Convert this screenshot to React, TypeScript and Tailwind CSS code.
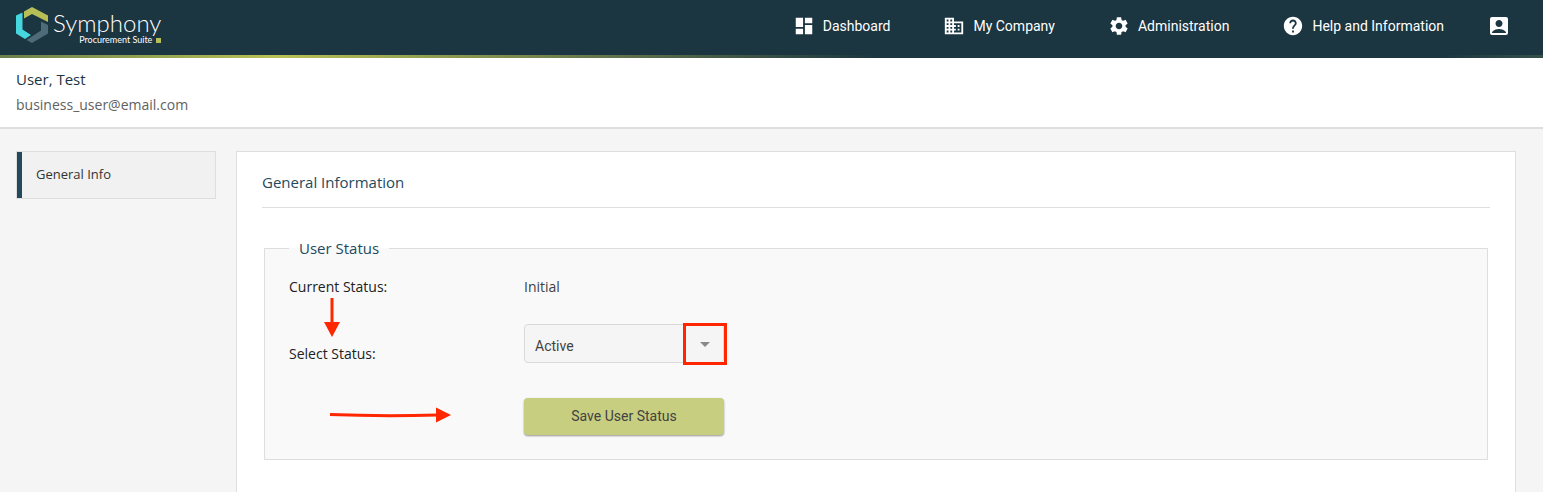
import React from "react";
import {
  MdDashboard,
  MdSettings,
  MdHelp,
  MdAccountBox,
  MdArrowDropDown,
  MdDomain,
} from "react-icons/md";

function Logo() {
  return (
    <a href="#home" aria-label="Symphony Procurement Suite" className="flex items-start gap-[5px] text-white">
      <svg viewBox="0 0 32 36" className="h-9 w-8" aria-hidden="true">
        <path d="M8 4.500 16 0 32 8.500V15L16 7 8 11.500Z" fill="#b6bf55" />
        <path d="M0 8.500 6.500 5.500V22.500L15 28 9 32 0 26.500Z" fill="#45d6de" />
        <path d="M25 14.500 32 18V26.500L16 36 10.500 33 25 23.500Z" fill="#4d6b79" />
      </svg>
      <span className="flex flex-col items-end">
        <span className="font-[Lato] text-2xl leading-8 font-light">Symphony</span>
        <span className="-mt-1 flex items-center gap-1 font-[Lato] text-[9px] leading-2.5">
          Procurement Suite
          <span className="size-[5px] bg-[#b6bf55]" />
        </span>
      </span>
    </a>
  );
}

function NavLink({ icon, label }: { icon: React.ReactNode; label: string }) {
  return (
    <a href="#nav" className="flex items-center gap-2 text-sm text-white">
      {icon}
      {label}
    </a>
  );
}

function Header() {
  return (
    <header className="bg-[#1b3541]">
      <div className="flex h-[55px] items-start justify-between pr-8 pl-4">
        <div className="pt-[7px]">
          <Logo />
        </div>
        <nav className="flex items-center gap-[53px] pt-[14px] font-[Roboto]">
          <NavLink icon={<MdDashboard size={22} />} label="Dashboard" />
          <NavLink icon={<MdDomain size={22} />} label="My Company" />
          <NavLink icon={<MdSettings size={22} />} label="Administration" />
          <NavLink icon={<MdHelp size={22} />} label="Help and Information" />
          <a href="#account" aria-label="Account" className="-ml-2.5 text-white">
            <MdAccountBox size={24} />
          </a>
        </nav>
      </div>
      <div className="h-[3px] bg-[linear-gradient(90deg,#6b7f4c_0%,#b9c155_18%,#1b3541_57%,#1b3541_93%,#35504a_100%)]" />
    </header>
  );
}

function DownArrow() {
  return (
    <svg viewBox="0 0 16 40" className="absolute top-[21px] left-[35px] h-10 w-4" aria-hidden="true">
      <path d="M8 0V26" stroke="#ff2600" strokeWidth="3" />
      <path d="M0 24H16L8 39Z" fill="#ff2600" />
    </svg>
  );
}

function RightArrow() {
  return (
    <svg viewBox="0 0 122 16" className="ml-[41px] h-4 w-[122px]" aria-hidden="true">
      <path d="M0 7.500Q50 9.500 108 8" fill="none" stroke="#ff2600" strokeWidth="3" />
      <path d="M106 .5V15.500L121 8Z" fill="#ff2600" />
    </svg>
  );
}

export default function App() {
  return (
    <div className="flex min-h-screen flex-col bg-[#f5f5f5] font-['Open_Sans',sans-serif]">
      <Header />
      <div className="border-b-2 border-[#dedede] bg-white px-4 pt-[9px] pb-2.5">
        <h1 className="mb-0.5 text-[15px] leading-6 text-[#1b3541]">User, Test</h1>
        <p className="text-sm leading-6 text-[#616161]">business_user@email.com</p>
      </div>
      <div className="flex grow gap-5 pt-[22px] pr-[27px] pl-4">
        <aside className="w-[200px] shrink-0">
          <a href="#general" className="flex h-12 items-center border border-[#dedede] bg-[#f1f1f1] text-[13px] text-[#333]">
            <span className="mr-3.5 h-full w-[5px] bg-[#234a5c]" />
            General Info
          </a>
        </aside>
        <main className="grow border border-b-0 border-[#dedede] bg-white px-[25px] pt-[18px]">
          <h2 className="border-b border-[#dedede] pb-[13px] text-[15px] leading-6 text-[#234a5c]">General Information</h2>
          <fieldset className="mx-0.5 mt-7 h-[224px] border border-[#dedede] bg-[#f9f9f9] px-6">
            <legend className="px-2.5 text-[15px] leading-6 text-[#234a5c]">User Status</legend>
            <div className="grid grid-cols-[235px_200px] pt-[17px] text-sm leading-5">
              <span className="relative text-[#212121]">
                Current Status:
                <DownArrow />
              </span>
              <span className="text-[#424242]">Initial</span>
              <label htmlFor="status" className="mt-[47px] text-[#212121]">Select Status:</label>
              <div className="relative mt-[27px]">
                <select
                  id="status"
                  defaultValue="Active"
                  className="h-[39px] w-full appearance-none rounded-sm border border-[#d9d9d9] bg-[#f5f5f5] px-2.5 pt-1 font-[Roboto] text-sm text-[#424242]"
                >
                  <option>Active</option>
                </select>
                <span className="pointer-events-none absolute -top-px -right-[3px] flex h-[42px] w-11 items-center justify-center border-3 border-[#ff2600] text-[#8a8a8a]">
                  <MdArrowDropDown size={24} />
                </span>
              </div>
              <div className="mt-[34px] pt-[9px]">
                <RightArrow />
              </div>
              <button type="button" className="mt-[34px] h-[37px] rounded-sm bg-[#c8ce80] pb-0.5 font-[Roboto] text-sm text-[#424242] shadow-[0_1px_2px_#00000066]">
                Save User Status
              </button>
            </div>
          </fieldset>
        </main>
      </div>
    </div>
  );
}
